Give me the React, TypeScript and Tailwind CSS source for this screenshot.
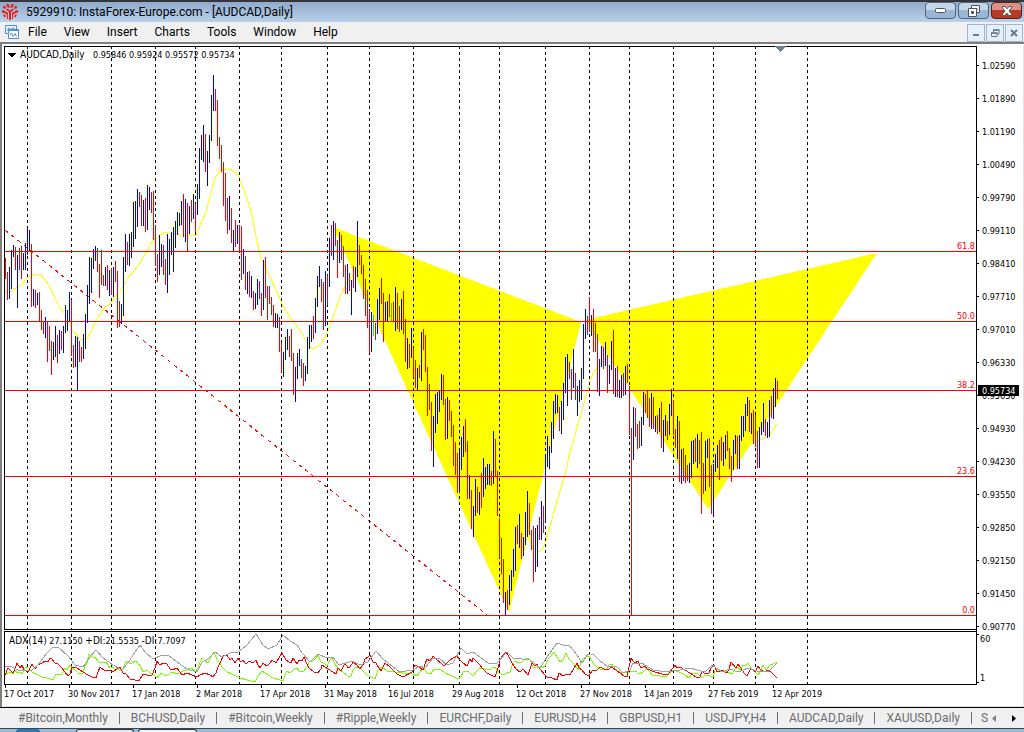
import React from 'react';

type Bar = [number, number, string];

// One entry per trading day: "high low colour" in chart units, two units apart.
const DAYS =
  '258 279 r,272 300 r,267 299 b,250 289 b,245 257 b,247 270 r,255 308 b,248 270 r,246 279 r,253 270 b,243 270 b,228 255 b,230 252 b,244 307 r,289 306 b,290 308 r,293 305 b,292 321 r,310 330 r,322 334 r,317 338 b,322 362 r,326 351 r,341 375 r,342 360 b,326 357 b,335 363 r,330 354 b,331 350 r,326 353 b,305 333 b,310 331 b,292 321 b,300 356 r,345 368 r,336 367 b,337 391 b,341 362 r,347 362 r,334 359 b,314 349 b,285 323 b,257 304 b,258 293 b,249 269 b,246 261 b,248 272 r,264 298 r,250 285 r,275 286 r,267 286 b,265 290 r,270 296 b,268 295 r,267 297 b,261 282 r,271 328 r,301 327 r,304 324 b,257 316 b,' +
  '234 272 b,242 265 r,234 266 b,232 258 b,202 247 b,201 239 b,189 227 b,192 207 r,195 226 r,200 226 b,198 232 r,185 230 b,187 210 b,192 213 r,191 240 r,225 266 r,254 282 r,235 275 b,244 267 b,245 275 r,259 285 r,234 293 b,239 275 b,232 255 b,227 272 b,221 248 b,212 235 b,213 226 b,201 225 b,194 237 r,199 242 b,203 251 r,206 234 b,200 222 r,194 219 b,204 232 r,184 215 b,148 199 b,135 160 b,125 162 b,134 172 r,151 186 b,135 163 b,95 141 b,75 111 b,89 111 r,100 146 r,137 159 r,145 172 r,162 206 r,173 221 r,198 234 r,196 230 b,208 243 r,230 251 b,220 247 r,225 244 b,225 252 r,226 280 r,249 274 b,' +
  '256 290 r,272 294 b,271 297 r,276 298 b,291 310 r,293 309 b,279 305 b,281 299 r,293 316 r,260 310 b,257 298 r,286 320 r,286 304 r,297 315 r,305 327 r,313 328 b,314 328 b,317 352 r,343 372 r,352 377 b,337 360 b,329 350 b,336 357 r,329 361 r,353 395 r,367 402 b,353 379 b,349 366 b,359 378 r,363 386 r,366 381 b,337 374 b,325 349 b,325 342 b,316 339 r,298 333 b,276 307 b,266 287 b,279 302 r,282 330 r,271 326 b,275 305 r,238 287 b,225 256 r,221 260 b,223 246 r,240 278 r,232 263 b,235 260 r,246 277 r,265 294 r,264 294 b,273 291 r,280 315 b,266 288 r,267 292 b,221 277 b,245 265 r,255 274 r,265 299 r,' +
  '279 316 r,290 328 r,309 353 r,312 352 b,315 336 g,323 340 r,299 334 b,288 320 b,278 304 r,293 342 r,302 321 b,301 321 b,294 317 r,303 321 g,302 321 r,287 331 b,293 329 r,306 332 r,299 330 b,291 334 r,319 362 r,338 369 b,344 368 r,328 358 b,348 377 r,360 388 r,368 391 b,365 378 r,332 381 b,329 350 r,335 372 r,367 416 r,384 410 r,402 451 r,416 467 b,394 433 b,392 424 b,390 412 b,374 400 b,375 405 r,399 440 r,397 439 b,400 421 r,411 437 r,425 466 r,442 475 r,453 493 r,448 493 b,437 470 b,426 457 b,419 452 r,441 499 r,475 499 b,490 529 r,506 537 b,479 516 b,487 513 r,492 515 b,473 508 r,458 497 b,' +
  '467 489 b,464 485 b,464 485 b,471 486 r,431 484 b,439 476 r,471 516 r,518 558 r,538 574 r,559 603 r,592 616 b,590 610 r,575 605 b,570 591 b,549 577 b,527 571 b,525 544 r,514 548 b,533 559 r,537 556 b,512 545 b,491 537 b,503 535 r,530 550 r,526 582 r,528 572 b,525 567 b,517 540 r,501 540 b,506 533 r,454 522 b,436 467 b,446 469 b,422 453 b,401 439 b,394 414 b,395 413 b,407 431 r,401 434 b,383 420 b,357 393 b,354 406 b,362 379 r,369 400 r,349 388 b,373 400 r,386 416 b,380 402 b,368 400 b,324 379 b,309 339 b,316 335 r,297 332 r,315 336 b,309 352 r,323 352 r,334 392 r,359 396 b,346 367 b,347 369 r,' +
  '342 366 b,355 393 r,365 384 b,341 370 b,330 394 r,368 397 b,366 397 r,380 398 b,375 398 b,373 396 r,366 395 b,364 383 r,386 435 r,428 615 r,407 460 b,408 437 r,424 449 r,421 448 r,417 446 b,392 425 b,394 413 r,391 418 r,398 427 r,393 429 b,397 429 r,416 432 b,415 434 r,408 432 b,402 448 r,420 452 b,415 436 b,421 440 r,404 435 b,389 416 b,400 435 r,429 448 r,416 459 b,421 482 r,449 484 b,448 481 r,455 483 r,465 481 r,463 483 b,441 478 b,440 464 b,438 462 r,434 468 b,440 464 r,432 514 r,463 494 r,441 491 b,439 458 b,438 487 r,465 514 r,464 516 b,454 472 b,445 468 b,440 480 r,437 461 r,442 466 b,' +
  '435 459 b,431 451 r,448 469 r,456 482 r,440 470 b,435 454 b,436 469 r,435 469 b,416 441 b,416 437 b,404 431 b,397 416 b,400 432 r,413 434 b,410 444 r,415 447 r,431 468 r,427 468 b,422 435 b,403 432 b,419 436 r,422 438 b,400 437 b,396 418 r,388 419 b,378 407 b,381 399 r';

const BARS: Bar[] = DAYS.split(',').map((d) => {
  const [hi, lo, c] = d.split(' ');
  return [Number(hi), Number(lo), c];
});

const COLORS: Record<string, string> = { r: '#f80000', b: '#0000f0', g: '#00ff00' };

const MONTHS = [27, 71, 111, 155, 195, 239, 281, 327, 369, 413, 459, 499, 545, 589, 629, 673, 713, 755, 807];

const PRICES = [
  '1.02590', '1.01890', '1.01190', '1.00490', '0.99790', '0.99110', '0.98410', '0.97710', '0.97010',
  '0.96330', '0.95630', '0.94930', '0.94230', '0.93550', '0.92850', '0.92150', '0.91450', '0.90770',
];

const DATES = [
  '17 Oct 2017', '30 Nov 2017', '17 Jan 2018', '2 Mar 2018', '17 Apr 2018', '31 May 2018', '16 Jul 2018',
  '29 Aug 2018', '12 Oct 2018', '27 Nov 2018', '14 Jan 2019', '27 Feb 2019', '12 Apr 2019',
];

const LEVELS: [string, number][] = [['61.8', 251], ['50.0', 321], ['38.2', 390], ['23.6', 476], ['0.0', 615]];

const AVERAGE =
  'M5 291L9 293L13 290L21 285L27 278L33 275L40 274L49 285L55 298L60 308L65 314L69 322L72 330L80 339L87 339L91 332L96 321L104 308L111 303L117 294L121 290L127 279L135 270L143 258L153 240L158 238L163 232L169 233L177 233L180 235L187 235L193 236L196 235L206 212L210 197L215 178L220 171L224 169L230 169L236 173L239 177L244 190L250 208L252 215L256 237L261 258L270 277L278 294L283 306L292 320L302 333L308 345L313 349L320 345L327 333L333 317L340 297L347 282L353 275M528 536L533 548L539 552L543 549L546 540L552 519L560 491L565 475L570 452L577 428L583 407L587 391L593 373L598 367L605 359L609 360M747 448L751 444L760 440L768 436L773 430L777 424';

const ADX =
  '5,666 12,667 18,670 32,670 38,665 47,653 53,647 58,647 68,656 75,665 83,667 90,657 96,650 103,658 113,665 122,670 128,663 135,652 140,645 145,652 153,659 162,655 168,655 177,662 187,669 197,672 202,662 208,659 215,652 222,657 230,653 238,652 247,645 256,634 263,645 268,649 277,645 283,635 290,641 297,645 302,653 310,662 318,654 327,658 333,657 339,665 352,661 360,665 368,662 376,651 383,659 393,667 400,672 413,670 420,666 425,668 433,658 440,659 447,665 453,663 461,648 467,654 473,652 480,657 488,663 497,663 507,652 513,658 522,659 530,660 540,668 547,657 557,643 563,645 569,645 577,655 582,663 588,654 593,654 600,661 607,666 617,667 623,673 630,670 633,663 642,663 653,670 667,672 680,670 690,668 697,670 705,672 712,665 722,672 730,669 738,672 748,668 757,671 768,672 777,663';
const MINUS_DI =
  '5,675 8,668 11,671 13,673 15,669 17,663 20,668 22,665 24,670 28,672 32,664 35,669 38,665 42,663 45,661 48,662 50,658 52,659 55,663 58,664 62,668 65,672 68,676 70,674 72,667 77,668 80,670 83,672 88,675 92,677 96,678 98,672 100,667 105,671 109,670 113,672 118,668 120,667 123,673 126,674 130,679 135,680 139,681 143,674 147,675 152,675 155,668 157,661 160,665 163,663 167,664 170,669 172,670 177,668 180,672 182,675 187,673 192,675 197,677 200,675 205,673 210,675 213,677 216,673 218,667 221,661 223,656 227,655 230,660 232,658 235,663 238,658 241,662 243,660 246,664 249,661 253,663 256,660 258,665 260,668 263,663 267,666 270,663 272,660 276,663 279,658 282,653 286,660 289,662 291,663 293,658 297,664 299,660 302,661 304,657 307,664 309,668 314,672 318,673 321,669 322,665 328,669 333,672 336,674 338,668 341,671 345,663 348,668 350,667 353,662 357,665 360,669 363,665 365,659 368,657 370,655 373,662 376,663 379,668 381,671 385,663 390,667 397,674 403,677 412,672 415,665 419,667 423,670 425,664 427,659 430,661 433,656 437,660 441,663 444,666 450,660 453,658 457,656 460,660 463,663 467,666 470,659 472,662 473,658 480,665 483,669 487,673 495,677 498,668 500,660 503,655 506,652 508,655 512,663 516,669 520,672 523,669 528,675 532,663 535,666 537,664 540,669 545,675 547,677 552,678 557,680 559,673 563,676 567,674 570,675 577,663 579,668 582,670 585,674 589,676 592,671 597,670 600,667 604,669 607,670 612,667 617,671 620,673 624,676 627,677 631,658 633,661 635,663 638,661 641,668 645,666 647,669 655,672 662,674 668,674 673,668 675,665 677,668 680,667 685,670 690,673 696,677 700,677 702,671 705,674 709,673 711,668 714,665 717,672 722,670 727,673 729,669 731,662 736,668 738,664 741,668 744,673 747,676 750,670 752,669 755,672 758,666 761,670 764,672 768,670 771,672 775,676 777,678';
const PLUS_DI =
  '5,675 10,672 13,674 15,670 17,673 20,672 22,674 25,668 28,667 32,672 38,675 42,677 47,678 53,680 56,674 58,675 62,674 64,670 65,668 67,670 70,665 72,668 75,670 78,673 83,673 85,666 87,663 89,654 92,657 95,657 98,661 100,663 103,662 106,662 110,668 113,667 115,671 117,667 120,671 123,668 125,664 127,661 129,663 132,663 135,661 138,663 141,667 143,672 147,670 150,673 154,675 157,678 159,675 162,673 165,676 167,675 172,672 177,674 183,671 187,670 190,668 192,668 195,672 198,668 200,662 202,658 205,661 208,663 211,657 214,652 217,660 220,663 222,667 227,672 232,674 240,678 247,680 255,682 258,676 262,671 265,673 268,675 273,678 280,680 283,681 285,675 287,671 290,673 293,670 297,668 299,671 301,672 304,671 307,667 309,662 313,661 316,658 318,655 321,662 325,664 327,666 330,660 332,658 335,664 339,670 343,672 348,676 351,676 353,670 356,667 360,668 364,672 367,675 375,679 378,670 382,667 387,671 395,672 403,673 412,674 417,676 422,669 424,668 427,673 431,674 434,669 440,669 445,673 450,675 458,679 461,677 463,672 468,671 473,676 477,671 480,668 485,669 490,670 493,667 495,667 499,673 503,675 507,673 510,672 513,663 515,661 518,663 522,662 524,660 527,658 530,660 533,667 537,667 542,668 545,666 548,659 551,656 554,652 558,659 560,662 563,660 566,653 569,659 573,663 577,668 578,670 582,660 587,656 590,657 593,663 597,667 600,669 607,669 609,665 612,664 615,669 620,672 630,672 635,671 640,674 643,672 647,668 650,672 652,675 660,676 667,676 673,670 679,672 685,675 689,678 691,675 693,673 698,674 702,678 705,675 707,675 710,676 713,677 715,670 717,669 722,671 727,672 732,674 735,669 738,667 740,670 743,665 745,666 748,663 751,668 755,672 758,675 760,672 763,665 766,670 770,665 773,664 777,662';

function Chart() {
  return (
    <svg viewBox="4 46 1019 660" className="block h-auto w-full" role="img" aria-label="AUDCAD, Daily">
      <defs>
        <clipPath id="pattern">
          <path d="M333 227L581 322L509 612ZM585 320L877 253L708 509Z" />
        </clipPath>
      </defs>
      <g shapeRendering="crispEdges" fill="none" strokeWidth="1">
        <path d="M333 227L581 322L509 612ZM585 320L877 253L708 509Z" fill="#ffff00" />
        <path d={AVERAGE} stroke="#ffff00" />
        <path d="M5 230L487 615" stroke="#ff0000" strokeDasharray="4 4" />
        {MONTHS.map((x) => (
          <g key={x}>
            <path d={`M${x + 0.5} 46V629M${x + 0.5} 634V684`} stroke="#000000" strokeDasharray="3 3" />
            <path d={`M${x + 0.5} 46V629`} stroke="#0000a8" strokeDasharray="3 3" clipPath="url(#pattern)" />
          </g>
        ))}
        {BARS.map(([hi, lo, c], i) => (
          <rect key={i} x={5 + i * 2} y={hi} width="1" height={lo - hi} fill={COLORS[c]} />
        ))}
        {LEVELS.map(([label, y]) => (
          <path key={label} d={`M5 ${y + 0.5}H976`} stroke="#ff0000" />
        ))}
        <polyline points={PLUS_DI} stroke="#7cfc00" />
        <polyline points={MINUS_DI} stroke="#ff0000" />
        <polyline points={ADX} stroke="#a0a0a0" />
        <path d="M4.500 46V629.500H976.500M4 46.500H976.500V684.500H4.500V631.500H976" stroke="#000000" />
        {PRICES.map((p, i) => (
          <rect key={p} x="977" y={65 + i * 33} width="2" height="1" fill="#000000" />
        ))}
        <path d="M977 634.500H979M977 682.500H979" stroke="#000000" />
        {DATES.map((d, i) => (
          <rect key={d} x={5 + i * 64} y="685" width="1" height="3" fill="#000000" />
        ))}
        <path d="M775 46H786L780.500 52Z" fill="#708090" />
        <path d="M8 53H16L12 57.500Z" fill="#000000" />
      </g>
      <g className="font-['DejaVu_Sans_Condensed','DejaVu_Sans',sans-serif] text-[9px]" fill="#000000">
        <text x="20" y="58" className="text-[10px]">AUDCAD,Daily</text>
        <text x="93" y="58">0.95846 0.95924 0.95572 0.95734</text>
        <text x="9" y="644">
          <tspan className="text-[10px]">ADX(14)</tspan> 27.1150 <tspan className="text-[10px]">+DI:</tspan>21.5535 <tspan className="text-[10px]">-DI:</tspan>7.7097
        </text>
        {PRICES.map((p, i) => (
          <text key={p} x="982" y={69 + i * 33}>{p}</text>
        ))}
        <text x="980" y="642">60</text>
        <text x="980" y="681">1</text>
        {DATES.map((d, i) => (
          <text key={d} x={4 + i * 64} y="697">{d}</text>
        ))}
        <rect x="978" y="385" width="41" height="11" />
        <text x="982" y="394" fill="#ffffff">0.95734</text>
        {LEVELS.map(([label, y]) => (
          <text key={label} x="975" y={y - 2} textAnchor="end" fill="#ff0000">{label}</text>
        ))}
      </g>
    </svg>
  );
}

const MENUS = ['File', 'View', 'Insert', 'Charts', 'Tools', 'Window', 'Help'];
const TABS = [
  '#Bitcoin,Monthly', 'BCHUSD,Daily', '#Bitcoin,Weekly', '#Ripple,Weekly', 'EURCHF,Daily',
  'EURUSD,H4', 'GBPUSD,H1', 'USDJPY,H4', 'AUDCAD,Daily', 'XAUUSD,Daily',
];

function Logo() {
  return (
    <svg width="16" height="16" viewBox="0 0 16 16" fill="#ee1c12" aria-hidden="true">
      <path d="M7 16V8L4 5.500L5 4.500L8 6.500L11 4.500L12 5.500L9 8V16Z" />
      <path d="M5 15V10.500L1.500 8.500L0 9V6L2 6.500L6 9V15ZM11 15V10.500L14.500 8.500L16 9V6L14 6.500L10 9V15Z" />
      <path d="M4 0.500L6.500 0L7.500 2V4L5.500 3.500ZM12 0.500L9.500 0L8.500 2V4L10.500 3.500ZM0.500 4L2 1.500L4 3L3.500 5ZM15.500 4L14 1.500L12 3L12.500 5ZM1 10.500H3L4 12.500L2.500 13.500ZM15 10.500H13L12 12.500L13.500 13.500Z" />
    </svg>
  );
}

function ChartIcon() {
  return (
    <svg width="15" height="15" viewBox="0 0 15 15" fill="none" stroke="#4a8fd8" aria-hidden="true">
      <path d="M0.500 8.500V0.500H11.500V4M0.500 8.500H4M2 5.500L4 3L5.500 5L8 2.500L9.500 4" />
      <path d="M3.500 4.500H13.500V13.500H3.500Z" fill="#ffffff" />
      <path d="M3 5.500H14" />
      <path d="M5 10L6.500 8L8 11.500L10 8.500L11.500 11.500" />
    </svg>
  );
}

export default function App() {
  return (
    <div className="flex min-h-screen flex-col bg-[#f0f0f0] font-[Roboto,'Open_Sans',sans-serif] text-xs text-black">
      <header className="flex h-[22px] items-center border-t-2 border-[#35353b] bg-linear-to-b from-[#8fabcc] to-[#b9d1ea] pl-[2px] pr-[2px]">
        <Logo />
        <h1 className="ml-2 flex-1 leading-5">5929910: InstaForex-Europe.com - [AUDCAD,Daily]</h1>
        <div className="flex gap-[2px] self-start">
          <button aria-label="Minimize" className="flex h-[17px] w-[31px] items-center justify-center rounded-sm border border-[#53657c] bg-linear-to-b from-[#c4d6ea] from-50% to-[#9ab6d5] to-50%">
            <svg width="12" height="5" viewBox="0 0 12 5" aria-hidden="true"><rect x="0.500" y="0.500" width="10" height="4" rx="1" fill="#fff" stroke="#50535f" /></svg>
          </button>
          <button aria-label="Restore" className="flex h-[17px] w-[31px] items-center justify-center rounded-sm border border-[#53657c] bg-linear-to-b from-[#c4d6ea] from-50% to-[#9ab6d5] to-50%">
            <svg width="13" height="12" viewBox="0 0 13 12" fill="#fff" stroke="#50535f" aria-hidden="true"><path d="M4.500 0.500H12.500V7.500H4.500ZM7 3.500H10V5H7Z" fillRule="evenodd" /><path d="M1.500 3.500H9.500V11.500H1.500ZM4.500 6.500H6.500V8.500H4.500Z" fillRule="evenodd" /></svg>
          </button>
          <button aria-label="Close" className="flex h-[17px] w-[31px] items-center justify-center rounded-sm border border-[#5c1d20] bg-linear-to-b from-[#dc9186] from-45% to-[#b83a26] to-50%">
            <svg width="12" height="10" viewBox="0 0 12 10" aria-hidden="true"><path d="M1.500 0.500H4L6 2.800L8 0.500H10.500V2L8 5L10.500 8V9.500H8L6 7.200L4 9.500H1.500V8L4 5L1.500 2Z" fill="#fff" stroke="#50535f" /></svg>
          </button>
        </div>
      </header>
      <nav className="flex h-5 items-center pl-[5px] pr-px" aria-label="Main menu">
        <ChartIcon />
        <div className="ml-2 flex flex-1 gap-[17px] leading-5">
          {MENUS.map((m) => (
            <button key={m}>{m}</button>
          ))}
        </div>
        <div className="flex gap-px pt-px text-[#687a8f]">
          <button aria-label="Minimize chart" className="flex h-[18px] w-[18px] items-center justify-center border border-[#9fb6cd] bg-[#e6f0fa]">
            <svg width="8" height="8" viewBox="0 0 8 8" stroke="currentColor" aria-hidden="true"><path d="M1 6H7" strokeWidth="2" /></svg>
          </button>
          <button aria-label="Restore chart" className="flex h-[18px] w-[18px] items-center justify-center border border-[#9fb6cd] bg-[#e6f0fa]">
            <svg width="9" height="8" viewBox="0 0 9 8" fill="none" stroke="currentColor" aria-hidden="true"><path d="M2.500 3V1H8V5H6M0.500 4H6V7.500H0.500Z" /><path d="M2 1H8.500M0 4H6.500" strokeWidth="1.500" /></svg>
          </button>
          <button aria-label="Close chart" className="flex h-[18px] w-[18px] items-center justify-center border border-[#9fb6cd] bg-[#e6f0fa]">
            <svg width="8" height="8" viewBox="0 0 8 8" stroke="currentColor" aria-hidden="true"><path d="M1 1L7 7M7 1L1 7" strokeWidth="2" /></svg>
          </button>
        </div>
      </nav>
      <main className="border-t-2 border-l-2 border-[#808080] bg-white pl-[2px] pt-[2px]">
        <div className="border-r border-b border-[#e3e3e3]">
          <Chart />
        </div>
      </main>
      <div className="flex h-[21px] items-center border-t border-black pl-[7px] pr-1 text-[#6d6d6d]">
        <div className="flex min-w-0 flex-1 items-center leading-5 whitespace-nowrap">
          {TABS.map((t) => (
            <React.Fragment key={t}>
              <button className="shrink-0 px-[11px]">{t}</button>
              <span className="h-3 w-px shrink-0 bg-[#6d6d6d]" />
            </React.Fragment>
          ))}
          <button className="shrink-0 pl-[9px]">S</button>
        </div>
        <button aria-label="Scroll tabs left" className="flex w-3 justify-center">
          <svg width="4" height="7" viewBox="0 0 4 7" fill="#808080" aria-hidden="true"><path d="M4 0V7L0 3.500Z" /></svg>
        </button>
        <button aria-label="Scroll tabs right" className="ml-2 flex w-3 justify-center">
          <svg width="4" height="7" viewBox="0 0 4 7" fill="#000" aria-hidden="true"><path d="M0 0V7L4 3.500Z" /></svg>
        </button>
      </div>
      <footer className="flex flex-1 border-t border-[#3b4654] bg-[#9db9d8] pl-4">
        <div className="h-[3px] w-6 rounded-t-full bg-[#2f77b5]" />
        <div className="ml-9 h-[3px] w-[58px] rounded-t-sm border border-b-0 border-[#2d3a4a] bg-[#dfe8f2]" />
        <div className="ml-1 h-[3px] w-[59px] rounded-t-sm border border-b-0 border-[#2d3a4a] bg-[#f2f6fa]" />
      </footer>
    </div>
  );
}
